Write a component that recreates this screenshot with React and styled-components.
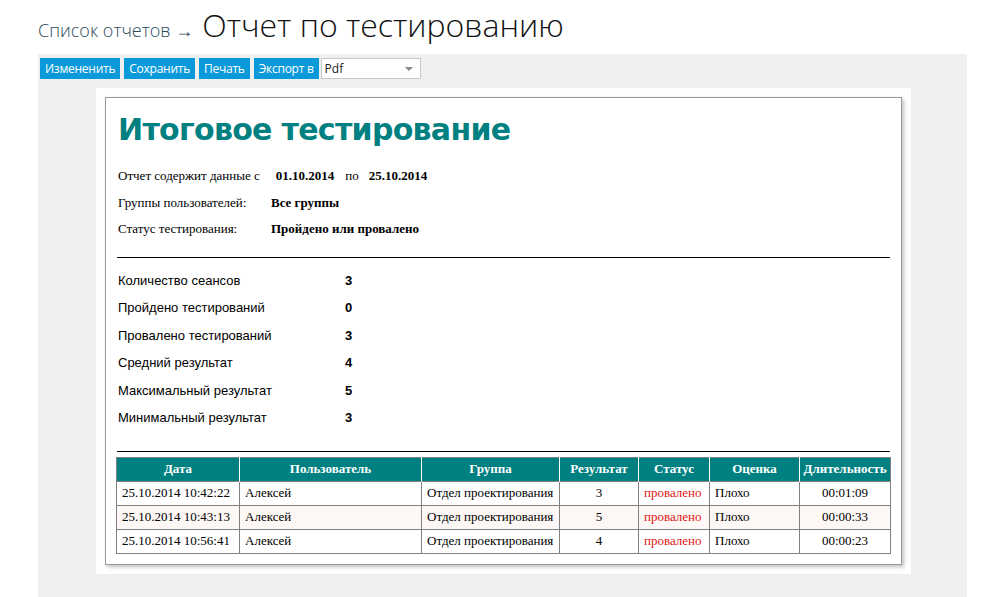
import React from "react";
import styled, { createGlobalStyle } from "styled-components";

const GlobalStyle = createGlobalStyle`
  html, body {
    margin: 0;
    padding: 0;
    background: #fff;
  }
  body {
    font-family: "Open Sans", "Liberation Sans", sans-serif;
  }
`;

const info = [
  { label: "Группы пользователей:", value: "Все группы" },
  { label: "Статус тестирования:", value: "Пройдено или провалено" },
];

const stats = [
  ["Количество сеансов", "3"],
  ["Пройдено тестирований", "0"],
  ["Провалено тестирований", "3"],
  ["Средний результат", "4"],
  ["Максимальный результат", "5"],
  ["Минимальный результат", "3"],
];

const columns = [
  { title: "Дата", width: 123 },
  { title: "Пользователь", width: 182 },
  { title: "Группа", width: 138 },
  { title: "Результат", width: 79 },
  { title: "Статус", width: 71 },
  { title: "Оценка", width: 90 },
  { title: "Длительность", width: 91 },
];

const rows = [
  ["25.10.2014 10:42:22", "Алексей", "Отдел проектирования", "3", "провалено", "Плохо", "00:01:09"],
  ["25.10.2014 10:43:13", "Алексей", "Отдел проектирования", "5", "провалено", "Плохо", "00:00:33"],
  ["25.10.2014 10:56:41", "Алексей", "Отдел проектирования", "4", "провалено", "Плохо", "00:00:23"],
];

function App() {
  return (
    <Page>
      <GlobalStyle />
      <Heading>
        <Crumb>Список отчетов →</Crumb>
        <Title>Отчет по тестированию</Title>
      </Heading>
      <Panel>
        <Toolbar>
          <Button>Измененить</Button>
          <Button>Сохранить</Button>
          <Button>Печать</Button>
          <Button>Экспорт в</Button>
          <Select>
            <span>Pdf</span>
            <Caret />
          </Select>
        </Toolbar>
        <Viewer>
          <Paper>
            <ReportTitle>Итоговое тестирование</ReportTitle>
            <InfoBlock>
              <InfoRow>
                <span>Отчет содержит данные с</span>
                <Strong $gap={16}>01.10.2014</Strong>
                <Plain $gap={11}>по</Plain>
                <Strong $gap={10}>25.10.2014</Strong>
              </InfoRow>
              {info.map((r) => (
                <InfoRow key={r.label}>
                  <InfoLabel>{r.label}</InfoLabel>
                  <Strong>{r.value}</Strong>
                </InfoRow>
              ))}
            </InfoBlock>
            <Rule />
            <Stats>
              {stats.map(([label, value]) => (
                <StatRow key={label}>
                  <StatLabel>{label}</StatLabel>
                  <StatValue>{value}</StatValue>
                </StatRow>
              ))}
            </Stats>
            <Rule />
            <Table>
              <colgroup>
                {columns.map((c) => (
                  <col key={c.title} style={{ width: c.width }} />
                ))}
              </colgroup>
              <thead>
                <tr>
                  {columns.map((c) => (
                    <Th key={c.title}>{c.title}</Th>
                  ))}
                </tr>
              </thead>
              <tbody>
                {rows.map((r, i) => (
                  <Tr key={i} $alt={i % 2 === 1}>
                    <Td>{r[0]}</Td>
                    <Td>{r[1]}</Td>
                    <Td>{r[2]}</Td>
                    <Td $center>{r[3]}</Td>
                    <Td $red>{r[4]}</Td>
                    <Td>{r[5]}</Td>
                    <Td $center>{r[6]}</Td>
                  </Tr>
                ))}
              </tbody>
            </Table>
          </Paper>
        </Viewer>
      </Panel>
    </Page>
  );
}

const Page = styled.div`
  padding: 0 0 0 38px;
  height: 597px;
  overflow: hidden;
`;

const Heading = styled.div`
  display: flex;
  align-items: baseline;
  gap: 9px;
  height: 54px;
  box-sizing: border-box;
  line-height: 50px;
  white-space: nowrap;
`;

const Crumb = styled.span`
  font-size: 18px;
  font-weight: 300;
  color: #2c4a5a;
`;

const Title = styled.span`
  font-size: 32px;
  font-weight: 300;
  color: #111;
`;

const Panel = styled.div`
  width: 929px;
  background: #efefef;
  padding: 4px 0 0 2px;
  box-sizing: border-box;
  height: 543px;
`;

const Toolbar = styled.div`
  display: flex;
  align-items: center;
  gap: 4px;
  height: 21px;
`;

const Button = styled.div`
  height: 21px;
  line-height: 21px;
  padding: 0 5px;
  background: #0a9ad9;
  color: #fff;
  font-family: "Open Sans", "Liberation Sans", sans-serif;
  font-size: 12px;
  letter-spacing: -0.25px;
  white-space: nowrap;
`;

const Select = styled.div`
  position: relative;
  width: 100px;
  height: 21px;
  box-sizing: border-box;
  margin-left: -2px;
  border: 1px solid #c8c8c8;
  background: #fff;
  display: flex;
  align-items: center;
  padding-left: 3px;
  font-family: "Open Sans", "Liberation Sans", sans-serif;
  font-size: 12px;
  color: #222;
`;

const Caret = styled.span`
  position: absolute;
  right: 7px;
  top: 8px;
  border-left: 4px solid transparent;
  border-right: 4px solid transparent;
  border-top: 4px solid #888;
`;

const Viewer = styled.div`
  margin: 9px 0 0 56px;
  width: 815px;
  background: #fff;
  padding: 9px;
  box-sizing: border-box;
`;

const Paper = styled.div`
  border: 1px solid #999;
  box-shadow: 2px 2px 4px rgba(0, 0, 0, 0.25);
  padding: 10px 11px 10px 10px;
  background: #fff;
`;

const ReportTitle = styled.h1`
  margin: 0;
  padding-left: 2px;
  font-family: "DejaVu Sans", Verdana, sans-serif;
  font-weight: bold;
  font-size: 30px;
  line-height: 44px;
  color: #008080;
  letter-spacing: -0.7px;
`;

const InfoBlock = styled.div`
  padding: 11px 0 14px 2px;
  font-family: "Liberation Serif", "Times New Roman", serif;
  font-size: 13px;
  color: #000;
`;

const InfoRow = styled.div`
  display: flex;
  align-items: center;
  height: 26.5px;
`;

const InfoLabel = styled.span`
  width: 153px;
`;

const Plain = styled.span`
  margin-left: ${(p) => p.$gap || 0}px;
`;

const Strong = styled.span`
  font-weight: bold;
  margin-left: ${(p) => p.$gap || 0}px;
`;

const Rule = styled.hr`
  margin: 0 0 0 1px;
  border: 0;
  border-top: 1px solid #000;
`;

const Stats = styled.div`
  padding: 9px 0 19px 2px;
  font-family: "Liberation Sans", Arial, sans-serif;
  font-size: 13px;
  color: #000;
`;

const StatRow = styled.div`
  display: flex;
  align-items: center;
  height: 27.5px;
`;

const StatLabel = styled.span`
  width: 227px;
`;

const StatValue = styled.span`
  font-weight: bold;
`;

const Table = styled.table`
  margin-top: 5px;
  width: 774px;
  border-collapse: collapse;
  table-layout: fixed;
  font-family: "Liberation Serif", "Times New Roman", serif;
  font-size: 13px;
  border: 1px solid #808080;
`;

const Th = styled.th`
  background: #008080;
  color: #fff;
  font-weight: bold;
  height: 23px;
  padding: 0 2px;
  border-left: 1px solid #fff;
  text-align: center;
  white-space: nowrap;
  &:first-child {
    border-left: 0;
  }
`;

const Tr = styled.tr`
  background: ${(p) => (p.$alt ? "#fdf8f6" : "#fff")};
`;

const Td = styled.td`
  height: 23px;
  padding: 0 5px;
  border: 1px solid #808080;
  text-align: ${(p) => (p.$center ? "center" : "left")};
  color: ${(p) => (p.$red ? "#e01515" : "#000")};
  white-space: nowrap;
`;

export default App;
